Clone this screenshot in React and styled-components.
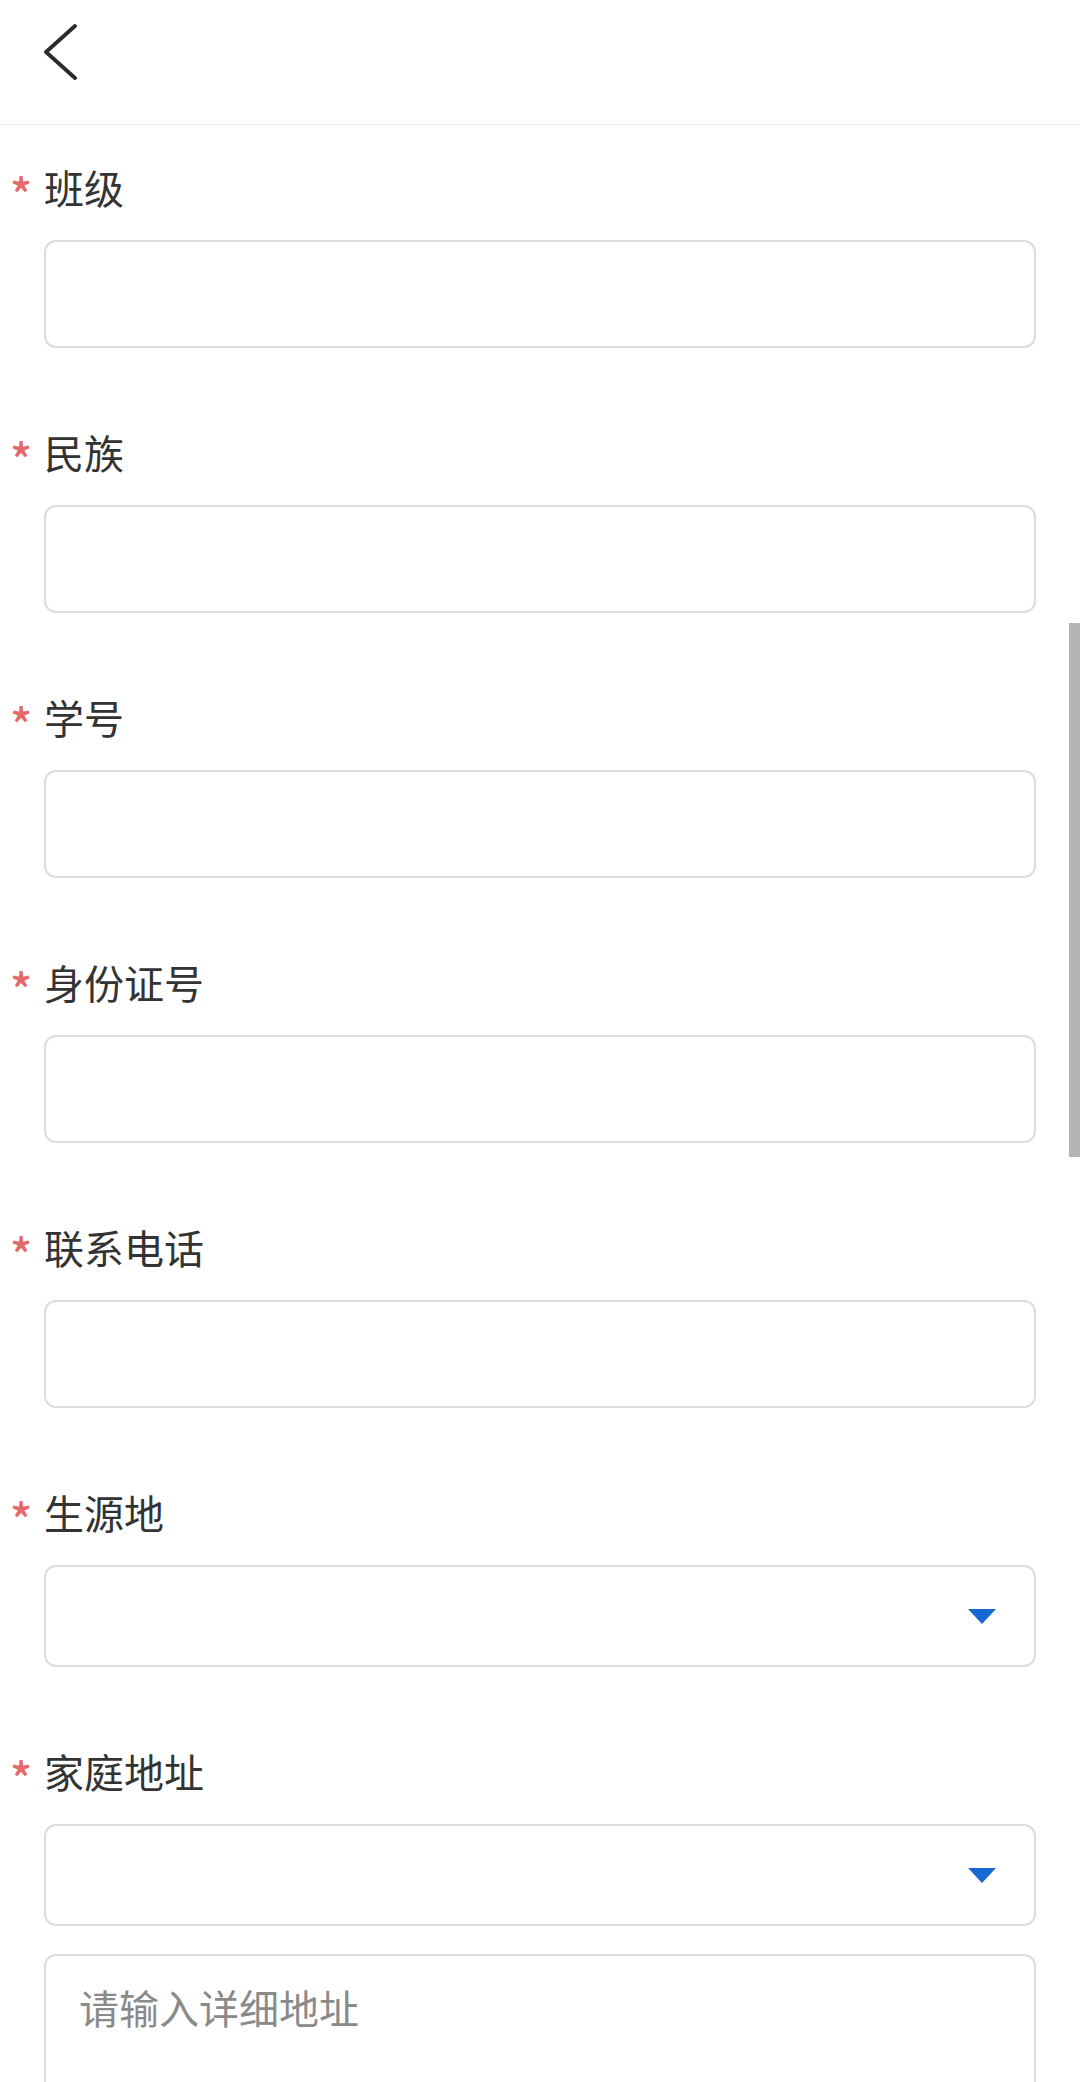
import React from 'react';
import styled, { createGlobalStyle } from 'styled-components';

const GlobalStyle = createGlobalStyle`
  html, body {
    margin: 0;
    padding: 0;
    background: #ffffff;
    overflow: hidden;
  }
  body {
    font-family: "Noto Sans CJK SC", "Noto Sans", sans-serif;
    color: #333333;
  }
  * {
    box-sizing: border-box;
  }
`;

const Page = styled.div`
  position: relative;
  width: 1080px;
  height: 2082px;
  overflow: hidden;
  background: #ffffff;
`;

const Header = styled.header`
  height: 125px;
  border-bottom: 1px solid #eeeeee;
  display: flex;
  align-items: flex-start;
  padding: 24px 0 0 42px;
`;

const BackButton = styled.button`
  width: 38px;
  height: 56px;
  padding: 0;
  border: none;
  background: transparent;
  display: flex;
  align-items: center;
  justify-content: center;
`;

const Form = styled.div`
  padding: 37px 44px 0 44px;
  display: flex;
  flex-direction: column;
`;

const Field = styled.div`
  display: flex;
  flex-direction: column;
  margin-bottom: ${p => (p.$last ? '0' : '79px')};
`;

const Label = styled.div`
  display: flex;
  align-items: flex-start;
  height: 56px;
  margin-left: -34px;
  margin-bottom: 22px;
  font-size: 40px;
  line-height: 50px;
  color: #333333;
`;

const Asterisk = styled.span`
  width: 34px;
  padding-left: 0;
  color: #e46a6a;
  font-size: 46px;
  line-height: 62px;
  font-weight: 500;
`;

const Box = styled.div`
  height: ${p => (p.$select ? '102px' : '108px')};
  border: 2px solid #dcdcdc;
  border-radius: 12px;
  display: flex;
  align-items: center;
  justify-content: flex-end;
  padding: 0 38px 0 30px;
  background: #ffffff;
`;

const Caret = styled.span`
  width: 0;
  height: 0;
  border-left: 14px solid transparent;
  border-right: 14px solid transparent;
  border-top: 15px solid #1769d2;
`;

const TextArea = styled.div`
  margin-top: 28px;
  height: 220px;
  border: 2px solid #dcdcdc;
  border-radius: 12px;
  padding: 23px 33px;
  font-size: 40px;
  line-height: 56px;
  color: #8a8a8a;
`;

const ScrollThumb = styled.div`
  position: absolute;
  right: 0;
  top: 623px;
  width: 11px;
  height: 534px;
  background: #b4b4b4;
`;

const fields = [
  { label: '班级' },
  { label: '民族' },
  { label: '学号' },
  { label: '身份证号' },
  { label: '联系电话' },
  { label: '生源地', select: true },
];

export default function App() {
  return (
    <Page>
      <GlobalStyle />
      <Header>
        <BackButton aria-label="返回">
          <svg width="38" height="56" viewBox="0 0 38 56">
            <polyline
              points="33,2 4,28 33,54"
              fill="none"
              stroke="#2b2b2b"
              strokeWidth="3.8"
              strokeLinecap="round"
              strokeLinejoin="round"
            />
          </svg>
        </BackButton>
      </Header>
      <Form>
        {fields.map(f => (
          <Field key={f.label}>
            <Label>
              <Asterisk>*</Asterisk>
              {f.label}
            </Label>
            <Box $select={f.select}>{f.select && <Caret />}</Box>
          </Field>
        ))}
        <Field $last>
          <Label>
            <Asterisk>*</Asterisk>
            家庭地址
          </Label>
          <Box $select>
            <Caret />
          </Box>
          <TextArea>请输入详细地址</TextArea>
        </Field>
      </Form>
      <ScrollThumb />
    </Page>
  );
}
